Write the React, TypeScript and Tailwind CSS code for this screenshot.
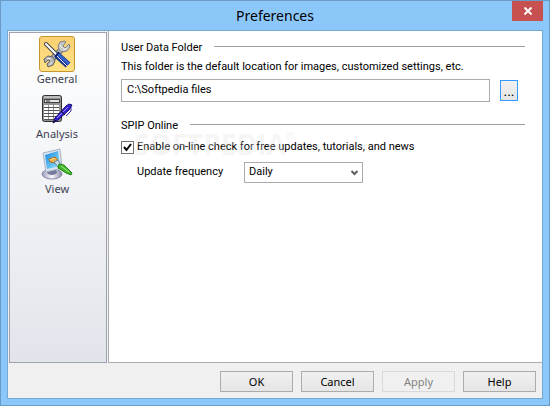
import { useState } from 'react'
import type { ReactNode } from 'react'

function ToolsIcon() {
  return (
    <svg width="28" height="28" viewBox="0 0 28 28" fill="none">
      <path d="M8 20 L20 8" stroke="#5a5a5a" strokeWidth="6" />
      <path d="M8 20 L20 8" stroke="#bdbdbd" strokeWidth="4" />
      <path d="M22 1 L17 2 L15 6 L16 10 L19 12 L24 11 L27 7 L26 4 L22 8 L20 6 L23 2 Z" fill="#c6c6c6" stroke="#808080" strokeWidth="1" />
      <path d="M1 19 L5 16 L10 17 L12 21 L10 25 L5 27 L4 24 L7 21 L5 20 L2 23 Z" fill="#b5b5b5" stroke="#606060" strokeWidth="1" />
      <path d="M17 5 L19 8 M20 9 L24 9 M4 18 L8 19 M9 22 L7 25" stroke="#f2f2f2" strokeWidth="1" />
      <path d="M3 4 L14 15" stroke="#444" strokeWidth="4" strokeLinecap="round" />
      <path d="M3 4 L14 15" stroke="#fff" strokeWidth="2" strokeLinecap="round" />
      <path d="M14 15 L25 25" stroke="#17348f" strokeWidth="7" />
      <path d="M15 14 L26 24" stroke="#3464c8" strokeWidth="3" />
      <path d="M14 16 L24 26" stroke="#e9edff" strokeWidth="1" />
      <path d="M12 17 L16 12" stroke="#10236b" strokeWidth="2" />
    </svg>
  )
}

function CalculatorIcon() {
  return (
    <svg width="32" height="30" viewBox="0 0 32 30">
      <rect x="1.5" y="1.5" width="19" height="26" rx="2" fill="#929292" stroke="#303030" />
      <path d="M3 3h16" stroke="#bcbcbc" strokeWidth="2" />
      <rect x="3.5" y="5.5" width="15" height="3" fill="#e4e4e4" stroke="#444" />
      <path d="M5 7h4" stroke="#222" />
      {[11, 14, 17, 20, 23].map((y) => (
        <g key={y}>
          <rect x="3" y={y} width="4" height="2" fill="#fff" />
          <rect x="8" y={y} width="4" height="2" fill="#fff" />
          <rect x="13" y={y} width="5" height="2" fill="#fff" />
          <path d={`M3 ${y + 2.5}h15`} stroke="#555" />
        </g>
      ))}
      <path d="M12 29 L14 24 L25 12 L28 10 L31 11 L28 16 L17 26 Z" fill="#3421cf" stroke="#170c70" />
      <path d="M16 24 L27 13" stroke="#9b8cff" />
      <path d="M30 13 L30 17 L25 22" stroke="#3421b0" fill="none" />
      <path d="M20 17 L24 21 M12 29 L15 26" stroke="#111" />
    </svg>
  )
}

function DisplayIcon() {
  return (
    <svg width="32" height="32" viewBox="0 0 32 32">
      <defs>
        <linearGradient id="screen" x1="0" y1="0" x2="1" y2="1">
          <stop offset="0" stopColor="#1687e2" />
          <stop offset="1" stopColor="#9be9ff" />
        </linearGradient>
        <linearGradient id="stand" x1="0" y1="0" x2="1" y2="0">
          <stop offset="0" stopColor="#9b9dbb" />
          <stop offset="0.5" stopColor="#fafaff" />
          <stop offset="1" stopColor="#8688a6" />
        </linearGradient>
      </defs>
      <ellipse cx="11" cy="26" rx="10" ry="5" fill="url(#stand)" stroke="#8587a6" />
      <ellipse cx="11" cy="24" rx="5" ry="3" fill="#777a9c" />
      <path d="M2 5 L19 1 L21 20 L5 24 Z" fill="#dce5ef" stroke="#a8b5c6" />
      <path d="M4 7 L17 3 L19 18 L6 21 Z" fill="url(#screen)" />
      <path d="M8 11 L14 9 L17 12 L14 15 L9 14 Z" fill="#edb349" stroke="#a5681c" />
      <path d="M9 12 L13 10" stroke="#ffe29a" />
      <path d="M13 14 L17 12 L20 17 L17 19 Z" fill="#c6dce8" stroke="#63879f" />
      <path d="M18 16 L23 17 L31 25 L30 27 L25 25 L17 20 Z" fill="#43b52c" stroke="#27851c" />
      <path d="M20 18 L28 24" stroke="#a1ee79" />
    </svg>
  )
}

function NavItem({ label, active, onClick, children }: { label: string; active: boolean; onClick: () => void; children: ReactNode }) {
  return (
    <button type="button" onClick={onClick} className="flex flex-col items-center text-[11px] leading-[14px] text-[#3c4150]">
      <span className={`flex h-9 w-9 items-center justify-center rounded-[3px] border ${active ? 'border-[#c8962e] bg-linear-to-b from-[#fbd172] to-[#ffe284]' : 'border-transparent'}`}>
        {children}
      </span>
      {label}
    </button>
  )
}

function SectionTitle({ label }: { label: string }) {
  return (
    <div className="flex h-4 items-center">
      <h2 className="whitespace-nowrap">{label}</h2>
      <span className="mb-[3px] ml-3 h-px flex-1 bg-[#a0a0a0]" />
    </div>
  )
}

const dialogButton = 'h-[21px] w-[73px] border border-[#acacac] bg-linear-to-b from-[#f0f0f0] to-[#e5e5e5] leading-4 disabled:border-[#d9d9d9] disabled:bg-none disabled:text-[#838383]'

export default function App() {
  const [page, setPage] = useState('General')

  return (
    <div className="flex min-h-screen flex-col border border-[#6a9bc7] bg-[#8cc7fa] px-[6px] pb-[6px] font-['Noto_Sans',sans-serif] text-[11px] text-black">
      <header className="flex h-[29px] items-start">
        <span className="w-[31px]" />
        <h1 className="flex-1 text-center text-[14px] leading-[30px]">Preferences</h1>
        <button type="button" aria-label="Close" className="flex h-5 w-[31px] items-center justify-center bg-[#c75050]">
          <svg width="8" height="8" viewBox="0 0 8 8" stroke="#fff" strokeWidth="2">
            <path d="M0.5 0.5 L7.5 7.5 M7.5 0.5 L0.5 7.5" />
          </svg>
        </button>
      </header>

      <div className="flex flex-1 flex-col border border-[#76a8d4] bg-[#f0f0f0]">
        <div className="flex flex-1">
          <nav className="mt-px ml-px flex w-[98px] flex-col items-center gap-[5px] border border-[#a0a3af] bg-linear-to-b from-white to-[#e1e5eb] pt-[3px] pr-[2px]">
            <NavItem label="General" active={page === 'General'} onClick={() => setPage('General')}>
              <ToolsIcon />
            </NavItem>
            <NavItem label="Analysis" active={page === 'Analysis'} onClick={() => setPage('Analysis')}>
              <CalculatorIcon />
            </NavItem>
            <NavItem label="View" active={page === 'View'} onClick={() => setPage('View')}>
              <DisplayIcon />
            </NavItem>
          </nav>

          <main className="ml-px min-w-0 flex-1 border-b border-l border-[#acacac] bg-white pt-[9px] pr-[17px] pl-3 font-['Roboto',sans-serif]">
            <SectionTitle label="User Data Folder" />
            <label htmlFor="folder" className="mt-[3px] block leading-4">
              This folder is the default location for images, customized settings, etc.
            </label>
            <div className="mt-1 flex items-center gap-[10px] pr-[7px]">
              <input id="folder" type="text" defaultValue="C:\Softpedia files" className="h-[23px] min-w-0 flex-1 border border-[#acacac] px-[5px] pb-[2px] outline-none" />
              <button type="button" aria-label="Browse" className="h-[21px] w-[18px] border border-[#3399ff] bg-linear-to-b from-[#f0f0f0] to-[#e5e5e5] text-center text-[14px] leading-4">
                ...
              </button>
            </div>

            <div className="mt-4">
              <SectionTitle label="SPIP Online" />
            </div>
            <div className="relative mt-[5px]">
              <label className="flex h-4 items-center gap-[3px]">
                <span className="grid h-[13px] w-[13px] place-items-center">
                  <input type="checkbox" defaultChecked className="peer col-start-1 row-start-1 h-[13px] w-[13px] appearance-none border border-[#707070] bg-white" />
                  <svg className="pointer-events-none invisible col-start-1 row-start-1 peer-checked:visible" width="9" height="9" viewBox="0 0 9 9" fill="none" stroke="#000" strokeWidth="2">
                    <path d="M1 4 L3.5 7 L8 1" />
                  </svg>
                </span>
                Enable on-line check for free updates, tutorials, and news
              </label>
              <span aria-hidden="true" className="pointer-events-none absolute -top-3 left-3 flex items-start font-['Open_Sans',sans-serif] text-[28px] leading-8 font-bold text-white/30 [text-shadow:1px_1px_1px_rgb(0_0_0/0.05)]">
                SOFTPEDIA<span className="text-[10px] leading-4">®</span>
              </span>
            </div>
            <div className="mt-[7px] flex items-center pl-4">
              <label htmlFor="frequency" className="w-[107px]">Update frequency</label>
              <div className="grid w-[119px] items-center">
                <select id="frequency" defaultValue="Daily" className="col-start-1 row-start-1 h-[21px] appearance-none border border-[#acacac] bg-white px-1 outline-none">
                  <option>Daily</option>
                  <option>Weekly</option>
                  <option>Monthly</option>
                </select>
                <svg className="pointer-events-none col-start-1 row-start-1 mr-[5px] justify-self-end" width="7" height="6" viewBox="0 0 7 6" fill="none" stroke="#606060" strokeWidth="2">
                  <path d="M0.5 1 L3.5 4 L6.5 1" />
                </svg>
              </div>
            </div>
          </main>
        </div>

        <footer className="flex justify-end gap-2 pt-2 pr-[6px] pb-[6px]">
          <button type="button" className={dialogButton}>OK</button>
          <button type="button" className={dialogButton}>Cancel</button>
          <button type="button" disabled className={dialogButton}>Apply</button>
          <button type="button" className={dialogButton}>Help</button>
        </footer>
      </div>
    </div>
  )
}
